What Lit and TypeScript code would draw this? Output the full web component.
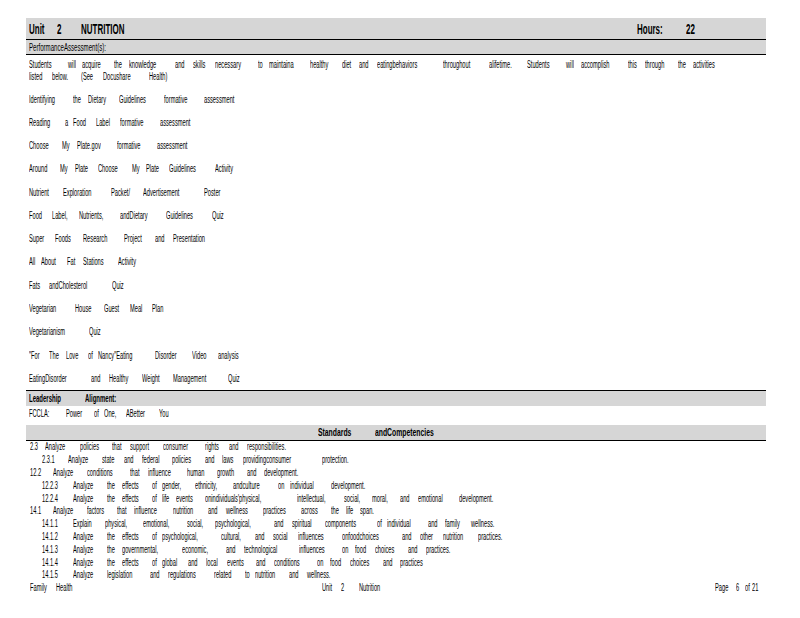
import { LitElement, html, css } from "lit";
import { customElement } from "lit/decorators.js";

type W = [string, number];
const parse = (s: string): W[] =>
  s.split("|").map((p) => {
    const i = p.lastIndexOf(" ");
    return [p.slice(0, i), Number(p.slice(i + 1))] as W;
  });

const TITLE = parse("Unit 29|2 57|NUTRITION 81|Hours: 637|22 686");
const PERF = parse("PerformanceAssessment(s): 29");
const INTRO = [
  "Students 29|will 68|acquire 82|the 114|knowledge 129|and 175|skills 193|necessary 215|to 258|maintaina 269|healthy 310|diet 342|and 359|eatingbehaviors 377|throughout 443|alifetime. 489|Students 527|will 566|accomplish 581|this 628|through 645|the 678|activities 693",
  "listed 29|below. 52|(See 81|Docushare 103|Health) 149",
].map(parse);
const LIST = [
  "Identifying 29|the 73|Dietary 88|Guidelines 119|formative 164|assessment 204",
  "Reading 29|a 65|Food 73|Label 96|formative 120|assessment 160",
  "Choose 29|My 62|Plate.gov 77|formative 117|assessment 157",
  "Around 29|My 60|Plate 75|Choose 98|My 132|Plate 146|Guidelines 169|Activity 215",
  "Nutrient 29|Exploration 63|Packet/ 111|Advertisement 143|Poster 204",
  "Food 29|Label, 52|Nutrients, 79|andDietary 120|Guidelines 166|Quiz 212",
  "Super 29|Foods 55|Research 83|Project 124|and 155|Presentation 173",
  "All 29|About 41|Fat 67|Stations 83|Activity 118",
  "Fats 29|andCholesterol 49|Quiz 112",
  "Vegetarian 29|House 75|Guest 104|Meal 130|Plan 152",
  "Vegetarianism 29|Quiz 89",
  "\"For 29|The 49|Love 66|of 88|Nancy\"Eating 98|Disorder 155|Video 192|analysis 218",
  "EatingDisorder 29|and 91|Healthy 109|Weight 142|Management 173|Quiz 228",
].map(parse);
const LEAD = parse("Leadership 29|Alignment: 85");
const FCCLA = parse("FCCLA: 29|Power 66|of 94|One, 104|ABetter 126|You 159");
const STD = parse("Standards 318|andCompetencies 375");
const STANDARDS = [
  "2.3 30|Analyze 45|policies 80|that 112|support 130|consumer 163|rights 205|and 229|responsibilities. 247",
  "2.3.1 42|Analyze 68|state 102|and 124|federal 142|policies 172|and 205|laws 222|providingconsumer 243|protection. 322",
  "12.2 30|Analyze 53|conditions 87|that 130|influence 148|human 187|growth 217|and 247|development. 264",
  "12.2.3 42|Analyze 73|the 107|effects 122|of 152|gender, 162|ethnicity, 195|andculture 233|on 278|individual 290|development. 331",
  "12.2.4 42|Analyze 73|the 107|effects 122|of 152|life 162|events 176|onindividuals'physical, 205|intellectual, 297|social, 344|moral, 372|and 400|emotional 418|development. 459",
  "14.1 30|Analyze 53|factors 87|that 117|influence 134|nutrition 173|and 208|wellness 226|practices 263|across 301|the 331|life 346|span. 360",
  "14.1.1 42|Explain 73|physical, 105|emotional, 143|social, 187|psychological, 215|and 274|spiritual 292|components 325|of 377|individual 387|and 428|family 445|wellness. 471",
  "14.1.2 42|Analyze 73|the 107|effects 122|of 152|psychological, 162|cultural, 221|and 255|social 273|influences 298|onfoodchoices 342|and 402|other 420|nutrition 443|practices. 478",
  "14.1.3 42|Analyze 73|the 107|governmental, 122|economic, 182|and 226|technological 244|influences 299|on 342|food 355|choices 375|and 408|practices. 426",
  "14.1.4 42|Analyze 73|the 107|effects 122|of 152|global 162|and 188|local 206|events 227|and 256|conditions 274|on 317|food 330|choices 350|and 383|practices 400",
  "14.1.5 42|Analyze 73|legislation 107|and 150|regulations 168|related 214|to 245|nutrition 255|and 289|wellness. 307",
  "Family 30|Health 56|Unit 322|2 341|Nutrition 359|Page 715|6 736|of 745|21 752",
].map(parse);

// The sheet starts at x=26; every word's slot is as wide as the distance to the next word.
const line = (words: W[], cls = "") => html`<div class="line ${cls}">
  <span class="lead" style="width:${words[0][1] - 26}px"></span>
  ${words.map(([t, x], i) => {
    const next = words[i + 1];
    return html`<span class="slot" style="width:${next ? next[1] - x : 60}px"><span class="word">${t}</span></span>`;
  })}
</div>`;

@customElement("app-root")
export class AppRoot extends LitElement {
  static styles = css`
    :host {
      display: block;
      width: 800px;
      height: 618px;
      overflow: hidden;
      background: #fff;
      font-family: "Liberation Sans", Arial, sans-serif;
      color: #000;
    }
    .sheet {
      width: 740px;
      margin-left: 26px;
      padding-top: 18px;
    }
    .line {
      display: flex;
      align-items: center;
      white-space: nowrap;
      font-size: 10px;
      height: 100%;
    }
    .lead,
    .slot {
      flex: none;
      display: block;
    }
    .word {
      display: inline-block;
      transform: scaleX(0.57);
      transform-origin: left center;
    }
    .band {
      background: #d6d6d6;
      font-weight: 700;
    }
    .title {
      height: 21px;
      border-bottom: 1px solid #000;
    }
    .title .line {
      font-size: 14px;
    }
    .perf {
      height: 14px;
      border-bottom: 1px solid #000;
    }
    .perf .line {
      font-weight: 400;
    }
    .perf .word {
      transform: scaleX(0.61);
    }
    .intro {
      padding-top: 3px;
      margin-bottom: 5.5px;
    }
    .intro > div {
      height: 12px;
    }
    .list > div {
      height: 23.27px;
    }
    .lead-band {
      height: 15px;
      border-top: 1px solid #000;
    }
    .lead-band .word {
      transform: scaleX(0.6);
    }
    .fccla {
      height: 16px;
      margin-bottom: 3px;
    }
    .std-band {
      height: 15px;
      border-bottom: 1px solid #000;
    }
    .std-band .line {
      font-size: 11px;
    }
    .std-band .word {
      transform: scaleX(0.62);
    }
    .standards {
      margin-top: -0.6px;
    }
    .standards > div {
      height: 12.82px;
    }
  `;

  render() {
    return html`<div class="sheet">
      <div class="band title">${line(TITLE)}</div>
      <div class="band perf">${line(PERF)}</div>
      <div class="intro">${INTRO.map((r) => html`<div>${line(r)}</div>`)}</div>
      <div class="list">${LIST.map((r) => html`<div>${line(r)}</div>`)}</div>
      <div class="band lead-band">${line(LEAD)}</div>
      <div class="fccla">${line(FCCLA)}</div>
      <div class="band std-band">${line(STD)}</div>
      <div class="standards">${STANDARDS.map((r) => html`<div>${line(r)}</div>`)}</div>
    </div>`;
  }
}
